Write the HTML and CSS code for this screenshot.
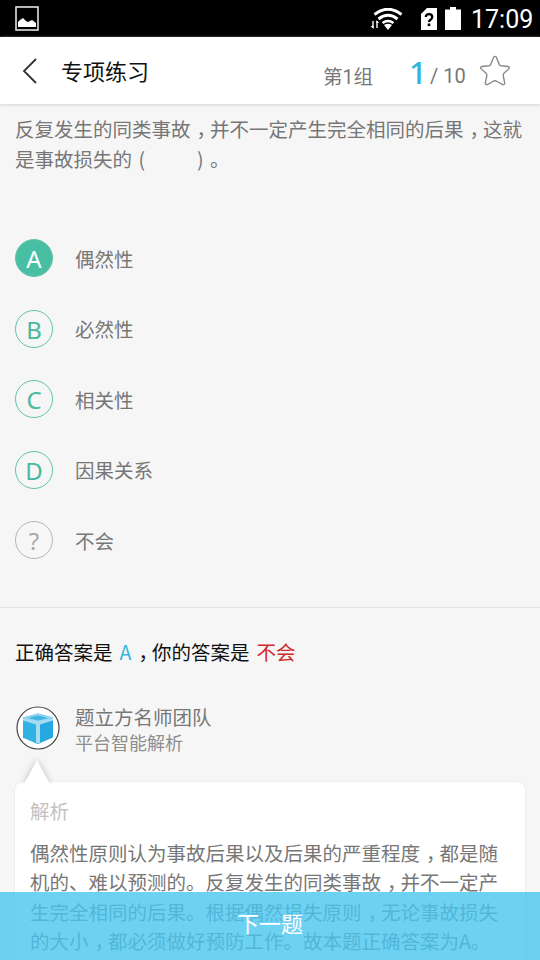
FILE: index.html
```html
<!DOCTYPE html>
<html lang="zh-CN">
<head>
<meta charset="utf-8">
<title>专项练习</title>
<link rel="stylesheet" href="styles.css">
</head>
<body>
<div class="screen">
  <div class="status">
    <svg class="status-pic" width="24" height="25" viewBox="0 0 24 25"><rect x="1" y="1" width="22" height="23" fill="none" stroke="#e4e4e4" stroke-width="1.600"/><path d="M3 21V16L5 14L8 12L11 15L13 16L17 14L21 17V21Z" fill="#fff"/></svg>
    <svg class="wifi" width="34" height="24" viewBox="0 0 34 24"><g fill="none" stroke="#fff"><path d="M4.500 6.500Q18 -4 31.500 6.500" stroke-width="3"/><path d="M8.500 11Q18 3.500 27.500 11" stroke-width="3"/><path d="M12.500 15Q18 11 23.500 15" stroke-width="2.600"/><path d="M3 13V20M7 13V20" stroke-width="1.400"/></g><path d="M14 17Q18 14.500 22 17L18 22ZM0.500 18H3.500V21ZM9 15H6.500V12Z" fill="#fff"/></svg>
    <svg class="sim" width="16" height="22" viewBox="0 0 16 22"><path d="M6 0H16V22H0V6Z" fill="#fff"/><path d="M4.800 9Q5 6.200 8 6.200Q11.200 6.200 11.200 9Q11.200 10.600 9.500 11.700Q8 12.700 8 14" fill="none" stroke="#000" stroke-width="2.300"/><rect x="6.700" y="15.500" width="2.600" height="2.600"/></svg>
    <svg class="battery" width="16" height="23" viewBox="0 0 16 23"><path d="M5 0H11V2.500H16V23H0V2.500H5Z" fill="#fff"/></svg>
    <span class="clock">17:09</span>
  </div>
  <header class="header">
    <svg class="back" width="16" height="26" viewBox="0 0 16 26"><path d="M14 1L2 13L14 25" fill="none" stroke="#333" stroke-width="1.800"/></svg>
    <h1 class="title">专项练习</h1>
    <span class="group">第<span class="latin">1</span>组</span>
    <span class="current">1</span>
    <span class="total">/ 10</span>
    <svg class="star" width="32" height="32" viewBox="0 0 32 32"><path d="M14.600 2.300Q16 .5 17.400 2.300L20.300 9.600Q20.800 10.500 22 10.700L29 11.500Q31.200 12 29.800 13.900L24.700 18.600Q24 19.500 24.200 20.500L25.700 28Q25.700 30.200 23.500 29.500L17.300 26Q16 25.400 14.700 26L8.500 29.500Q6.300 30.200 6.300 28L7.800 20.500Q8 19.500 7.300 18.600L2.200 13.900Q.8 12 3 11.500L10 10.700Q11.200 10.500 11.700 9.600Z" fill="none" stroke="#8a8a8a" stroke-width="1.400"/></svg>
  </header>
  <main class="content">
    <div class="question">
      <div>反复发生的同类事故<span class="comma">，</span>并不一定产生完全相同的后果<span class="comma">，</span>这就</div>
      <div>是事故损失的<span class="paren">(</span>　　<span class="paren">)</span>。</div>
    </div>
    <ul class="options">
      <li class="option"><span class="badge selected">A</span><span>偶然性</span></li>
      <li class="option"><span class="badge">B</span><span>必然性</span></li>
      <li class="option"><span class="badge">C</span><span>相关性</span></li>
      <li class="option"><span class="badge">D</span><span>因果关系</span></li>
      <li class="option"><span class="badge unsure">?</span><span>不会</span></li>
    </ul>
    <div class="result">正确答案是<span class="right">A</span><span class="comma">，</span>你的答案是<span class="wrong">不会</span></div>
    <div class="author">
      <svg class="avatar" width="44" height="44" viewBox="0 0 44 44"><circle cx="22" cy="22" r="21" fill="#fff" stroke="#444" stroke-width="1.200"/><path d="M22 7.500L37 11.500V31.500L22 38L7 31.500V11.500Z" fill="#27a9df"/><path d="M22 16V38L7 31.500V11.500Z" fill="#31b2e5"/><path d="M22 7.500L37 11.500L22 16.500L7 11.500Z" fill="#8fd5f0"/><path d="M22 9.500L32 12L22 14.500L12 12Z" fill="#3fb6e5"/><path d="M7 11.500L22 15.500L37 11.500V14.500L24 18.500V36.500L22 37.500L20 36.500V18.500L7 14.500Z" fill="#a4dcf2"/></svg>
      <div>
        <div class="name">题立方名师团队</div>
        <div class="role">平台智能解析</div>
      </div>
    </div>
    <section class="card">
      <svg class="pointer" width="36" height="27" viewBox="0 0 36 27"><path d="M18 3L31 27H5Z" fill="#fff"/></svg>
      <h2 class="card-title">解析</h2>
      <div class="explain">
        <div>偶然性原则认为事故后果以及后果的严重程度<span class="comma">，</span>都是随</div>
        <div>机的、难以预测的。反复发生的同类事故<span class="comma">，</span>并不一定产</div>
        <div>生完全相同的后果。根据偶然损失原则<span class="comma">，</span>无论事故损失</div>
        <div>的大小<span class="comma">，</span>都必须做好预防工作。故本题正确答案为A。</div>
      </div>
    </section>
  </main>
  <div class="next">下一题</div>
</div>
</body>
</html>
```
FILE: styles.css
```css
* { box-sizing: border-box; }

body {
  margin: 0;
  background: #f6f6f6;
  color: #777;
  font-family: "Noto Sans CJK SC", sans-serif;
  font-size: 19.5px;
}

.screen {
  position: relative;
  width: 540px;
  height: 960px;
  overflow: hidden;
}

.status {
  display: flex;
  align-items: flex-start;
  height: 37px;
  background: #000;
  color: #fff;
}

.status-pic { margin: 6px 0 0 15px; }
.wifi { margin: 8px 0 0 331px; }
.sim { margin: 8px 0 0 17px; }
.battery { margin: 7px 0 0 8px; }

.clock {
  margin-left: 10px;
  font: 25px/39px Roboto, sans-serif;
  white-space: nowrap;
}

.header {
  display: flex;
  height: 67px;
  background: #fff;
  box-shadow: 0 1px 3px #d4d4d8;
  white-space: nowrap;
}

.back { margin: 21px 0 0 22px; }

.title {
  width: 262px;
  margin: 0 0 0 23px;
  color: #111;
  font-size: 22px;
  font-weight: 400;
  line-height: 67px;
}

.group {
  width: 86px;
  font-size: 19.5px;
  line-height: 77px;
}

.latin { font-family: Roboto, sans-serif; }

.current {
  width: 21px;
  color: #34b3dc;
  font: 500 31px/71px "Noto Sans", sans-serif;
}

.total {
  width: 48px;
  font: 20px/79px Roboto, sans-serif;
}

.star { margin: 18px 0 0 1px; }

.question {
  height: 119px;
  padding: 10px 0 0 15px;
  line-height: 30px;
  white-space: nowrap;
}

.comma, .paren {
  display: inline-block;
  width: 19.5px;
  text-indent: 6px;
}

.paren {
  text-indent: 0;
  text-align: center;
}

.options {
  height: 385px;
  margin: 0;
  padding: 0 0 0 15px;
  border-bottom: 1px solid #e2e2e2;
  list-style: none;
}

.option {
  display: flex;
  align-items: center;
  gap: 22px;
  height: 70.5px;
}

.badge {
  width: 38px;
  height: 38px;
  border: 1.5px solid #62c4aa;
  border-radius: 50%;
  color: #48b99a;
  font: 24px/37px "Noto Sans", sans-serif;
  text-align: center;
}

.selected {
  background: #48bfa3;
  color: #fff;
}

.unsure {
  border-color: #b5b5b5;
  color: #aaa;
}

.result {
  height: 90px;
  padding-left: 15px;
  color: #111;
  line-height: 88px;
  white-space: nowrap;
}

.right {
  margin: 0 1px 0 7px;
  color: #34b3dc;
}

.wrong {
  margin-left: 7px;
  color: #cf2a27;
}

.author {
  display: flex;
  gap: 15px;
  height: 84px;
  padding: 8px 0 0 16px;
}

.name { margin-top: -2px; line-height: 25px; }
.role { color: #8d8d8d; font-size: 18px; line-height: 27px; }

.card {
  position: relative;
  width: 510px;
  height: 220px;
  margin-left: 15px;
  padding: 14px 15px 0;
  border-radius: 8px;
  background: #fff;
  box-shadow: 0 0 2px #ddd;
}

.pointer {
  position: absolute;
  top: -25px;
  left: 4px;
  filter: drop-shadow(0 0 3px #bbb);
  clip-path: inset(-6px -6px 0 -6px);
}

.card-title {
  margin: 0 0 13px;
  color: #c2c2c2;
  font-size: 19.5px;
  font-weight: 400;
  line-height: 29px;
}

.explain {
  line-height: 29.3px;
  white-space: nowrap;
}

.next {
  position: absolute;
  right: 0;
  bottom: 0;
  left: 0;
  height: 68px;
  background: rgba(73, 198, 239, .8);
  color: #fff;
  font-size: 22px;
  line-height: 60px;
  text-align: center;
}
```
